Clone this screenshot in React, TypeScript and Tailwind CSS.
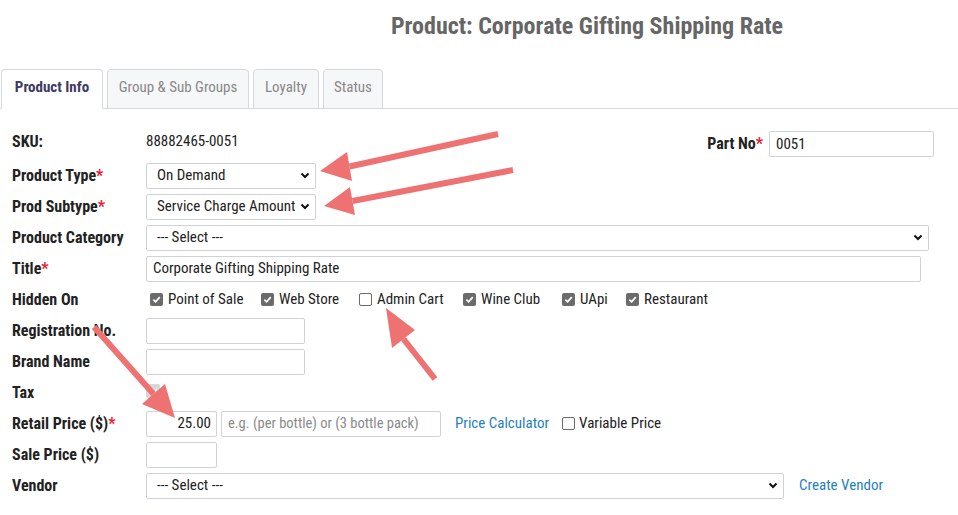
import React from 'react';

const Req = () => <span className="text-[#e8202a]">*</span>;

const Check = ({ checked = true }: { checked?: boolean }) =>
  checked ? (
    <span className="w-[13px] h-[13px] rounded-[2px] bg-[#6b6b6b] flex items-center justify-center shrink-0">
      <svg width="9" height="9" viewBox="0 0 10 10">
        <path d="M1.5 5.2 L4 7.6 L8.6 2.4" fill="none" stroke="#fff" strokeWidth="1.9" />
      </svg>
    </span>
  ) : (
    <span className="w-[13px] h-[13px] rounded-[2px] border border-[#6b6b6b] bg-white shrink-0" />
  );

const Chevron = () => (
  <svg width="10" height="7" viewBox="0 0 10 7" className="shrink-0">
    <path d="M1.5 1.5 L5 5 L8.5 1.5" fill="none" stroke="#111" strokeWidth="2" />
  </svg>
);

const Select = ({ value, w }: { value: string; w: string }) => (
  <div className={`${w} h-[26px] border border-[#cfd3d9] rounded-[2px] flex items-center justify-between pl-[10px] pr-[5px] text-[15px] text-[#222]`}>
    <span className="truncate">{value}</span>
    <Chevron />
  </div>
);

const Row = ({ label, req, children }: { label: string; req?: boolean; children?: React.ReactNode }) => (
  <div className="h-[31px] flex items-center">
    <div className="w-[134px] shrink-0 font-bold text-[16px] text-[#222]">
      {label}
      {req && <Req />}
    </div>
    <div className="flex-1 flex items-center">{children}</div>
  </div>
);

const hidden = [
  { label: 'Point of Sale', checked: true, w: 'w-[111px]' },
  { label: 'Web Store', checked: true, w: 'w-[98px]' },
  { label: 'Admin Cart', checked: false, w: 'w-[104px]' },
  { label: 'Wine Club', checked: true, w: 'w-[99px]' },
  { label: 'UApi', checked: true, w: 'w-[64px]' },
  { label: 'Restaurant', checked: true, w: 'w-[100px]' },
];

const tabs = [
  { label: 'Product Info', w: 'w-[102px]', active: true },
  { label: 'Group & Sub Groups', w: 'w-[142px]' },
  { label: 'Loyalty', w: 'w-[66px]' },
  { label: 'Status', w: 'w-[60px]' },
];

const Arrow = ({ tail, tip, a, b }: { tail: [number, number]; tip: [number, number]; a: [number, number]; b: [number, number] }) => {
  const bx = (a[0] + b[0]) / 2;
  const by = (a[1] + b[1]) / 2;
  return (
    <g fill="#ef7272" stroke="#ef7272">
      <line x1={tail[0]} y1={tail[1]} x2={bx} y2={by} strokeWidth="6" />
      <polygon points={`${tip[0]},${tip[1]} ${a[0]},${a[1]} ${b[0]},${b[1]}`} strokeWidth="0" />
    </g>
  );
};

export default function App() {
  return (
    <div className="relative w-[958px] h-[515px] overflow-hidden bg-white font-['Roboto_Condensed','Roboto',sans-serif] [font-stretch:75%] text-[#222]">
      {/* Header */}
      <div className="h-[52px] pl-[216px] flex items-center justify-center">
        <h1 className="text-[24px] font-bold text-[#666]">Product: Corporate Gifting Shipping Rate</h1>
      </div>

      {/* Tabs */}
      <div className="mt-[17px] h-[40px] flex items-end gap-[4px] pl-[1px] border-b border-[#d5d8de]">
        {tabs.map((t) => (
          <div
            key={t.label}
            className={`${t.w} h-[40px] -mb-px flex items-center justify-center pb-[4px] rounded-t-[4px] border border-[#d5d8de] text-[15px] ${
              t.active ? 'bg-white border-b-white font-bold text-[#3d3a62]' : 'bg-[#f6f7f9] text-[#888] h-[39px]'
            }`}
          >
            {t.label}
          </div>
        ))}
      </div>

      {/* Form */}
      <div className="pl-[12px] pt-[19px]">
        <div className="h-[32px] flex items-start">
          <div className="w-[134px] shrink-0 font-bold text-[16px] pt-[2px]">SKU:</div>
          <div className="flex-1 text-[15px] pt-[2px]">88882465-0051</div>
          <div className="flex items-center mr-[24px] mt-[3px]">
            <span className="font-bold text-[16px] mr-[6px]">
              Part No
              <Req />
            </span>
            <div className="w-[165px] h-[26px] border border-[#cfd3d9] rounded-[2px] flex items-center pl-[6px] text-[15px]">0051</div>
          </div>
        </div>

        <Row label="Product Type" req>
          <Select value="On Demand" w="w-[170px]" />
        </Row>
        <Row label="Prod Subtype" req>
          <Select value="Service Charge Amount" w="w-[170px]" />
        </Row>
        <Row label="Product Category">
          <Select value="--- Select ---" w="w-[783px]" />
        </Row>
        <Row label="Title" req>
          <div className="w-[775px] h-[26px] border border-[#cfd3d9] rounded-[2px] flex items-center pl-[6px] text-[15px]">
            Corporate Gifting Shipping Rate
          </div>
        </Row>
        <Row label="Hidden On">
          <div className="flex items-center pl-[4px]">
            {hidden.map((h) => (
              <div key={h.label} className={`${h.w} flex items-center gap-[5px] text-[15px]`}>
                <Check checked={h.checked} />
                <span>{h.label}</span>
              </div>
            ))}
          </div>
        </Row>
        <Row label="Registration No.">
          <div className="w-[159px] h-[26px] border border-[#cfd3d9] rounded-[2px]" />
        </Row>
        <Row label="Brand Name">
          <div className="w-[159px] h-[26px] border border-[#cfd3d9] rounded-[2px]" />
        </Row>
        <Row label="Tax">
          <span className="w-[14px] h-[14px] rounded-[2px] bg-[#d8d8d8] flex items-center justify-center -mt-[3px]">
            <svg width="9" height="9" viewBox="0 0 10 10">
              <path d="M1.5 5.2 L4 7.6 L8.6 2.4" fill="none" stroke="#f2f2f2" strokeWidth="1.9" />
            </svg>
          </span>
        </Row>
        <Row label="Retail Price ($)" req>
          <div className="w-[71px] h-[26px] border border-[#cfd3d9] rounded-[2px] flex items-center justify-end pr-[5px] text-[15px]">25.00</div>
          <div className="ml-[4px] w-[220px] h-[26px] border border-[#cfd3d9] rounded-[2px] flex items-center pl-[6px] text-[14.5px] text-[#8a8a8a]">
            e.g. (per bottle) or (3 bottle pack)
          </div>
          <span className="ml-[14px] text-[15px] text-[#1f7fc4]">Price Calculator</span>
          <div className="ml-[13px] flex items-center gap-[4px] text-[15px]">
            <Check checked={false} />
            <span>Variable Price</span>
          </div>
        </Row>
        <Row label="Sale Price ($)">
          <div className="w-[71px] h-[26px] border border-[#cfd3d9] rounded-[2px]" />
        </Row>
        <Row label="Vendor">
          <Select value="--- Select ---" w="w-[638px]" />
          <span className="ml-[15px] text-[15px] text-[#1f7fc4]">Create Vendor</span>
        </Row>
      </div>

      {/* Annotation arrows */}
      <svg className="absolute inset-0 pointer-events-none" width="958" height="515">
        <Arrow tail={[498, 134]} tip={[320, 171]} a={[347, 152]} b={[352, 181]} />
        <Arrow tail={[513, 170]} tip={[324, 206]} a={[350, 187]} b={[355, 215]} />
        <Arrow tail={[435, 379]} tip={[386, 308]} a={[415, 330]} b={[392, 348]} />
        <Arrow tail={[94, 327]} tip={[175, 418]} a={[142, 404]} b={[165, 384]} />
      </svg>
    </div>
  );
}
